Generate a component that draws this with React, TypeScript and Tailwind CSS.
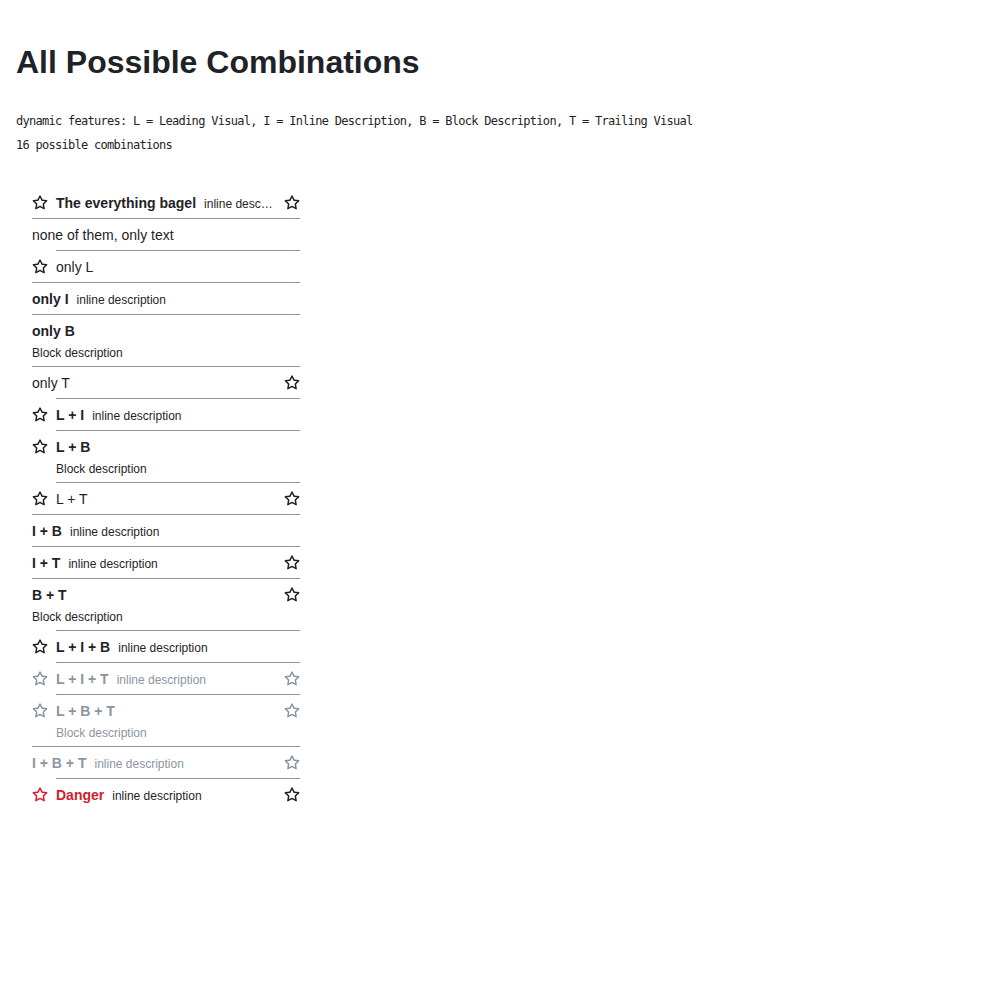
import React from "react";

const STAR =
  "M8 .25a.75.75 0 0 1 .673.418l1.882 3.815 4.21.612a.75.75 0 0 1 .416 1.279l-3.046 2.97.719 4.192a.751.751 0 0 1-1.088.791L8 12.347l-3.766 1.98a.75.75 0 0 1-1.088-.79l.72-4.194L.818 6.374a.75.75 0 0 1 .416-1.28l4.21-.611L7.327.668A.75.75 0 0 1 8 .25Zm0 2.445L6.615 5.5a.75.75 0 0 1-.564.41l-3.097.45 2.24 2.184a.75.75 0 0 1 .216.664l-.528 3.084 2.769-1.456a.75.75 0 0 1 .698 0l2.77 1.456-.53-3.084a.75.75 0 0 1 .216-.664l2.24-2.183-3.096-.45a.75.75 0 0 1-.564-.41L8 2.694Z";

function Star({ className }: { className?: string }) {
  return (
    <svg width="16" height="16" viewBox="0 0 16 16" className={className} fill="currentColor">
      <path d={STAR} />
    </svg>
  );
}

type Item = {
  text: string;
  L?: boolean;
  I?: boolean;
  B?: boolean;
  T?: boolean;
  disabled?: boolean;
  danger?: boolean;
};

const items: Item[] = [
  { text: "The everything bagel", L: true, I: true, T: true },
  { text: "none of them, only text" },
  { text: "only L", L: true },
  { text: "only I", I: true },
  { text: "only B", B: true },
  { text: "only T", T: true },
  { text: "L + I", L: true, I: true },
  { text: "L + B", L: true, B: true },
  { text: "L + T", L: true, T: true },
  { text: "I + B", I: true },
  { text: "I + T", I: true, T: true },
  { text: "B + T", B: true, T: true },
  { text: "L + I + B", L: true, I: true },
  { text: "L + I + T", L: true, I: true, T: true, disabled: true },
  { text: "L + B + T", L: true, B: true, T: true, disabled: true },
  { text: "I + B + T", I: true, T: true, disabled: true },
  { text: "Danger", L: true, I: true, T: true, danger: true },
];

function Row({ item, first }: { item: Item; first: boolean }) {
  const bold = item.I || item.B;
  const base = item.disabled ? "text-[#8c959f]" : "text-[#1f2328]";
  const titleColor = item.danger ? "text-[#cf222e]" : base;
  const iconColor = item.disabled ? "text-[#8c959f]" : "text-[#1f2328]";
  return (
    <li className="flex">
      {item.L && (
        <div className="w-6 shrink-0 pt-[9px]">
          <Star className={item.danger ? "text-[#cf222e]" : iconColor} />
        </div>
      )}
      <div
        className={`flex min-w-0 flex-1 items-start border-t pt-[6px] pb-[5px] ${
          first ? "border-transparent" : "border-[#8c959f]"
        }`}
      >
        <div className="min-w-0 flex-1">
          <div className="flex h-[20px] min-w-0 items-baseline">
            <span
              className={`shrink-0 text-[14px] leading-[20px] ${bold ? "font-bold" : ""} ${titleColor}`}
            >
              {item.text}
            </span>
            {item.I && (
              <span className={`ml-2 min-w-0 truncate text-[12px] leading-[16px] ${base}`}>
                inline description
              </span>
            )}
          </div>
          {item.B && (
            <div className={`mt-[4px] text-[12px] leading-[16px] ${base}`}>Block description</div>
          )}
        </div>
        {item.T && (
          <div className="ml-2 shrink-0 pt-[2px]">
            <Star className={iconColor} />
          </div>
        )}
      </div>
    </li>
  );
}

export default function App() {
  return (
    <div className="min-h-[1000px] bg-white p-4 font-['Liberation_Sans',Arial,sans-serif] text-[#1f2328]">
      <h1 className="mt-[26px] text-[32px] font-bold leading-[40px] text-[#1f2328]">
        All Possible Combinations
      </h1>
      <div className="mt-[27px] font-['DejaVu_Sans_Mono',monospace] text-[12px] leading-[24px] tracking-[-0.72px] text-[#1f2328]">
        <div>
          dynamic features: L = Leading Visual, I = Inline Description, B = Block Description, T =
          Trailing Visual
        </div>
        <div>16 possible combinations</div>
      </div>
      <ul className="mt-[29px] ml-4 w-[268px]">
        {items.map((it, i) => (
          <Row key={i} item={it} first={i === 0} />
        ))}
      </ul>
    </div>
  );
}
